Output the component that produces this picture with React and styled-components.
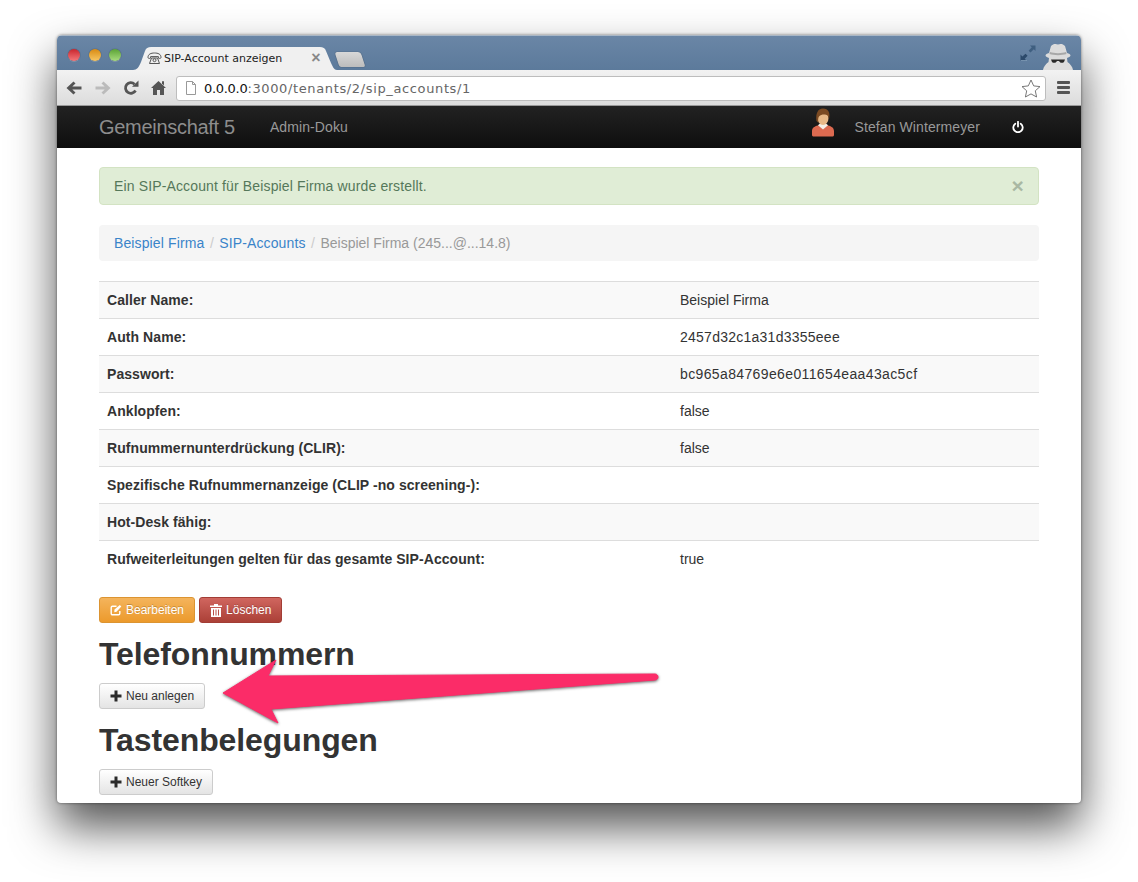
import React from 'react';
import styled, { createGlobalStyle, css } from 'styled-components';

const GlobalStyle = createGlobalStyle`
  html, body {
    margin: 0;
    background: #fff;
  }
  body {
    font-family: "Liberation Sans", Arial, sans-serif;
    font-size: 14px;
    color: #333;
  }
`;

const rows = [
  ['Caller Name:', 'Beispiel Firma', 0],
  ['Auth Name:', '2457d32c1a31d3355eee', 0.25],
  ['Passwort:', 'bc965a84769e6e011654eaa43ac5cf', 0.37],
  ['Anklopfen:', 'false', 0],
  ['Rufnummernunterdrückung (CLIR):', 'false', 0],
  ['Spezifische Rufnummernanzeige (CLIP -no screening-):', '', 0],
  ['Hot-Desk fähig:', '', 0],
  ['Rufweiterleitungen gelten für das gesamte SIP-Account:', 'true', 0],
];

const PhoneIcon = () => (
  <PhoneSvg width="15" height="13" viewBox="0 0 15 13" fill="none" stroke="#555" strokeWidth="1">
    <path d="M1 5.500C1 2 4 1 7.500 1S14 2 14 5.500c0 1-1.500 1.200-2.600.6V4.600H3.600v1.500C2.500 6.700 1 6.500 1 5.500z" />
    <path d="M4.500 6h6l2 5.500h-10z" />
    <circle cx="7.500" cy="8.200" r="1.500" />
  </PhoneSvg>
);

const BackIcon = ({ color }) => (
  <svg width="16" height="14" viewBox="0 0 16 14" fill={color}>
    <path d="M7.500 0.500 9.500 2.500 6.300 5.400H15.500V8.600H6.300L9.500 11.500 7.500 13.500 0.500 7z" />
  </svg>
);

const ReloadIcon = () => (
  <svg width="16" height="16" viewBox="0 0 16 16" fill="none">
    <path d="M12.500 10.500A5.300 5.300 0 1 1 11.500 4.200" stroke="#555" strokeWidth="2.800" />
    <path d="M9 6.800H15.500V0.500z" fill="#555" />
  </svg>
);

const HomeIcon = () => (
  <svg width="15" height="15" viewBox="0 0 15 15" fill="#555">
    <path d="M7.500 1 15 8H13V15H9V10H6V15H2V8H0z" />
    <path d="M11 1.200H13V5.500L11 3.500z" />
  </svg>
);

const PageIcon = () => (
  <svg width="12" height="14" viewBox="0 0 12 14" fill="#fff" stroke="#999">
    <path d="M1.500 .5H7.500L10.500 3.500V13.500H1.500z" />
    <path d="M7.500 .5V3.500H10.500" fill="none" />
  </svg>
);

const StarIcon = () => (
  <svg width="20" height="19" viewBox="0 0 20 19" fill="#fff" stroke="#777">
    <path d="M10 1 12.700 6.900 19 7.600 14.300 11.800 15.600 18 10 14.900 4.400 18 5.700 11.800 1 7.600 7.300 6.900z" />
  </svg>
);

const ExpandIcon = () => (
  <svg width="16" height="16" viewBox="0 0 16 16">
    <path d="M10 .5H15.500V6L13.800 4.300 10.500 7.600 8.600 5.700 11.800 2.300z" fill="#3f5f80" />
    <path d="M.5 9.500V15.500H6.500L4.700 13.700 7.600 10.700 5.500 8.700 2.400 11.500z" fill="#2c4a6b" />
    <path d="M1 15H7V15.800H1z" fill="#86a0bb" />
  </svg>
);

const IncognitoIcon = () => (
  <svg width="32" height="27" viewBox="0 0 32 27">
    <path d="M7 10 9 3C11 .5 14 .5 16 1.500 18 .5 21 .5 23 3L25 10C27 10.500 28.500 11.500 28.500 12.500 28.500 13.500 26.500 14.500 25 15L25.500 19C28 21 30.500 23.500 31 27H1C1.500 23.500 4 21 6.500 19L7 15C5.500 14.500 3.500 13.500 3.500 12.500 3.500 11.500 5 10.500 7 10Z" fill="#dcdcdc" />
    <path d="M8 9C12 10.500 20 10.500 24 9L24.500 11C20 12.500 12 12.500 7.500 11Z" fill="#a8a8a8" />
    <path d="M9 16.500H23L22 19C20.500 20.500 18 20 17 18H15C14 20 11.500 20.500 10 19Z" fill="#2a2a2a" />
  </svg>
);

const AvatarIcon = () => (
  <svg width="24" height="29" viewBox="0 0 24 29">
    <path d="M1 23C1 19 5 18 8 17H16C19 18 23 19 23 23V27C23 28 22 28.500 21 28.500H3C2 28.500 1 28 1 27Z" fill="#dc6a50" />
    <path d="M7 17.200 12 21.500 17 17.200 14.500 15H9.500Z" fill="#f5efe6" />
    <ellipse cx="12" cy="10" rx="5.500" ry="7" fill="#e8b987" />
    <path d="M5.500 13C4.500 6 6.500 .5 12 .5S19.500 5 18 11C17.500 7.500 16 6.500 13 6.500 11 6.500 9.500 7 8 8.500 7 10 7 12 7.500 15Z" fill="#7b4a22" />
  </svg>
);

const PowerIcon = () => (
  <svg width="12" height="12" viewBox="0 0 12 12" fill="none" stroke="#fff" strokeWidth="1.800" strokeLinecap="round">
    <path d="M3.300 2.700A4.700 4.700 0 1 0 8.700 2.700" />
    <path d="M6 .8V5.500" />
  </svg>
);

const EditIcon = () => (
  <svg width="12" height="12" viewBox="0 0 12 12" fill="none" stroke="#fff" strokeWidth="1.400">
    <path d="M9.800 7V9.500C9.800 10.300 9.300 10.800 8.500 10.800H2.500C1.700 10.800 1.200 10.300 1.200 9.500V3.500C1.200 2.700 1.700 2.200 2.500 2.200H6.500" />
    <path d="M4.500 5.500 9.800 1 11.300 2.500 6.500 7.800 4.300 8.200z" fill="#fff" stroke="none" />
  </svg>
);

const TrashIcon = () => (
  <svg width="12" height="13" viewBox="0 0 12 13" fill="#fff">
    <path d="M4 0H8V1.500H12V3H0V1.500H4zM1 4H11V13H1zM3 5.500V11.500H4V5.500zM5.500 5.500V11.500H6.500V5.500zM8 5.500V11.500H9V5.500z" fillRule="evenodd" />
  </svg>
);

const PlusIcon = () => (
  <svg width="12" height="12" viewBox="0 0 12 12" fill="#2b2b2b">
    <path d="M4.500 .5H7.500V4.500H11.500V7.500H7.500V11.500H4.500V7.500H.5V4.500H4.500z" />
  </svg>
);

const App = () => {
  return (
    <>
      <GlobalStyle />
      <Page>
        <Browser>
          <TitleBar>
            <Lights>
              <Light $top="#c9252d" $bottom="#f5787a" />
              <Light $top="#d88a12" $bottom="#f8c763" />
              <Light $top="#5ba335" $bottom="#a9dc7f" />
            </Lights>
            <Tab>
              <TabShape width="204" height="24" viewBox="0 0 204 24">
                <path d="M0 24C4 24 6 21 8 16L12 5C13 2 15 1 18 1H187C190 1 192 2 193 5L198 17C200 21 201 24 204 24Z" fill="#f0f0f0" />
              </TabShape>
              <PhoneIcon />
              <TabTitle>SIP-Account anzeigen</TabTitle>
              <TabClose>×</TabClose>
            </Tab>
            <NewTab />
            <TitleRight>
              <ExpandBox><ExpandIcon /></ExpandBox>
              <IncognitoIcon />
            </TitleRight>
          </TitleBar>
          <Toolbar>
            <NavButtons>
              <BackIcon color="#555" />
              <Flipped><BackIcon color="#bbb" /></Flipped>
              <ReloadIcon />
              <HomeIcon />
            </NavButtons>
            <UrlBar>
              <PageIcon />
              <UrlText><b>0.0.0.0</b>:3000/tenants/2/sip_accounts/1</UrlText>
              <StarIcon />
            </UrlBar>
            <Burger>
              <span /><span /><span />
            </Burger>
          </Toolbar>
          <NavBar>
            <Brand>Gemeinschaft 5</Brand>
            <NavLink>Admin-Doku</NavLink>
            <NavRight>
              <AvatarIcon />
              <NavLink>Stefan Wintermeyer</NavLink>
              <PowerIcon />
            </NavRight>
          </NavBar>
          <Main>
            <Alert>
              Ein SIP-Account für Beispiel Firma wurde erstellt.
              <AlertClose>×</AlertClose>
            </Alert>
            <Breadcrumb>
              <a>Beispiel Firma</a>
              <Sep>/</Sep>
              <a>SIP-Accounts</a>
              <Sep>/</Sep>
              <span>Beispiel Firma (245...@...14.8)</span>
            </Breadcrumb>
            <Table>
              <tbody>
                {rows.map(([label, value, spacing]) => (
                  <tr key={label}>
                    <th>{label}</th>
                    <Value $spacing={spacing}>{value}</Value>
                  </tr>
                ))}
              </tbody>
            </Table>
            <ButtonRow>
              <Button $kind="warning"><EditIcon />Bearbeiten</Button>
              <Button $kind="danger"><TrashIcon />Löschen</Button>
            </ButtonRow>
            <Heading>Telefonnummern</Heading>
            <Button><PlusIcon />Neu anlegen</Button>
            <Heading>Tastenbelegungen</Heading>
            <Button><PlusIcon />Neuer Softkey</Button>
          </Main>
          <Arrow width="460" height="70" viewBox="0 0 460 70">
            <path d="M8 39 61 6 53 22 440 20C444 20 444 26 440 26L56 55 63 69Z" fill="#fb2c68" stroke="#fb2c68" strokeWidth="1" strokeLinejoin="round" />
          </Arrow>
        </Browser>
      </Page>
    </>
  );
};

const Page = styled.div`
  height: 882px;
  padding: 35px 57px 0;
  box-sizing: border-box;
  overflow: hidden;
`;

const Browser = styled.div`
  position: relative;
  width: 1024px;
  height: 768px;
  border-radius: 5px 5px 4px 4px;
  overflow: hidden;
  background: #fff;
  box-shadow: 0 24px 46px rgba(0, 0, 0, 0.68), 0 0 3px rgba(0, 0, 0, 0.5);
`;

const TitleBar = styled.div`
  height: 35px;
  box-sizing: border-box;
  display: flex;
  align-items: flex-end;
  padding-left: 11px;
  background: linear-gradient(#6a86a6, #5c7a9b);
  border-top: 1px solid #a9b7c6;
`;

const Lights = styled.div`
  display: flex;
  gap: 8.500px;
  align-self: flex-start;
  margin-top: 13px;
`;

const Light = styled.span`
  width: 12px;
  height: 12px;
  border-radius: 50%;
  background: linear-gradient(${(p) => p.$top}, ${(p) => p.$bottom});
  box-shadow: 0 0 1px rgba(0, 0, 0, 0.7), 0 1px 0 rgba(255, 255, 255, 0.25);
`;

const Tab = styled.div`
  position: relative;
  width: 196px;
  height: 24px;
  margin-left: 12px;
  display: flex;
  align-items: center;
  gap: 2px;
  padding-left: 14px;
  box-sizing: border-box;
`;

const TabShape = styled.svg`
  position: absolute;
  left: 0;
  top: 0;
`;

const PhoneSvg = styled.svg`
  position: relative;
`;

const TabTitle = styled.span`
  position: relative;
  font-family: "DejaVu Sans", sans-serif;
  font-size: 11px;
  color: #222;
  white-space: nowrap;
`;

const TabClose = styled.span`
  position: relative;
  margin-left: 27px;
  font-size: 16px;
  font-weight: bold;
  color: #888;
`;

const NewTab = styled.div`
  width: 26px;
  height: 15px;
  margin: 0 0 3px 8px;
  border-radius: 3px 3px 2px 2px;
  background: linear-gradient(#d8d8d8, #bcbcbc);
  transform: skewX(18deg);
  box-shadow: 0 0 1px rgba(0, 0, 0, 0.6);
`;

const TitleRight = styled.div`
  margin-left: auto;
  display: flex;
  align-items: flex-end;
  gap: 6px;
  padding-right: 7px;
`;

const ExpandBox = styled.span`
  display: flex;
  margin-bottom: 9px;
`;

const Toolbar = styled.div`
  height: 36px;
  box-sizing: border-box;
  display: flex;
  align-items: center;
  padding: 0 11px 0 9px;
  background: linear-gradient(#f2f2f2, #dcdcdc);
  border-bottom: 1px solid #999;
`;

const NavButtons = styled.div`
  display: flex;
  align-items: center;
  gap: 12px;
  width: 110px;
`;

const Flipped = styled.span`
  display: flex;
  margin-left: 1px;
  transform: scaleX(-1);
`;

const UrlBar = styled.div`
  flex: 1;
  height: 25px;
  margin-top: 1px;
  box-sizing: border-box;
  display: flex;
  align-items: center;
  padding: 0 4px 0 8px;
  background: #fff;
  border: 1px solid #bdbdbd;
  border-radius: 3px;
`;

const UrlText = styled.span`
  flex: 1;
  margin-left: 7px;
  font-family: "DejaVu Sans", sans-serif;
  font-size: 13px;
  letter-spacing: 0.63px;
  color: #666;
  b {
    font-weight: normal;
    letter-spacing: -0.3px;
    color: #111;
  }
`;

const Burger = styled.div`
  width: 13px;
  margin-left: 11px;
  display: flex;
  flex-direction: column;
  gap: 2px;
  span {
    height: 3px;
    background: #555;
    border-radius: 1px;
  }
`;

const NavBar = styled.div`
  height: 42px;
  box-sizing: border-box;
  display: flex;
  align-items: center;
  padding: 0 57px 0 42px;
  background: linear-gradient(#222, #0e0e0e);
`;

const Brand = styled.span`
  font-size: 20px;
  letter-spacing: -0.3px;
  color: #8d8d8d;
  margin-right: 35px;
`;

const NavLink = styled.span`
  color: #999;
  letter-spacing: 0.1px;
`;

const NavRight = styled.div`
  margin-left: auto;
  display: flex;
  align-items: center;
  gap: 20px;
  svg:first-child {
    margin-bottom: 9px;
    margin-right: -1px;
  }
  svg:last-child {
    margin-left: 12px;
  }
`;

const Main = styled.div`
  padding: 19px 42px 0;
`;

const Alert = styled.div`
  position: relative;
  height: 38px;
  box-sizing: border-box;
  line-height: 36px;
  padding: 0 14px;
  margin-bottom: 20px;
  letter-spacing: 0.14px;
  color: #55785a;
  background: #e0edd6;
  border: 1px solid #d3e3c3;
  border-radius: 4px;
`;

const AlertClose = styled.span`
  position: absolute;
  right: 14px;
  top: 0;
  font-size: 21px;
  font-weight: bold;
  color: #a9b8a3;
`;

const Breadcrumb = styled.div`
  height: 36px;
  box-sizing: border-box;
  padding: 8px 15px;
  line-height: 20px;
  margin-bottom: 20px;
  color: #999;
  background: #f5f5f5;
  border-radius: 4px;
  a {
    color: #3a84c9;
    letter-spacing: 0.12px;
  }
`;

const Sep = styled.span`
  padding: 0 5.500px;
  color: #ccc;
`;

const Table = styled.table`
  width: 940px;
  margin-bottom: 20px;
  border-collapse: collapse;
  table-layout: fixed;
  tr:nth-child(odd) {
    background: #f9f9f9;
  }
  th, td {
    height: 36px;
    padding: 8px;
    line-height: 20px;
    text-align: left;
    box-sizing: border-box;
    border-top: 1px solid #ddd;
  }
  th {
    width: 573px;
    letter-spacing: 0.07px;
  }
`;

const Value = styled.td`
  letter-spacing: ${(p) => p.$spacing}px;
`;

const ButtonRow = styled.div`
  display: flex;
  gap: 4px;
`;

const kinds = {
  warning: css`
    color: #fff;
    text-shadow: 0 -1px 0 rgba(0, 0, 0, 0.2);
    background: linear-gradient(#f4b45c, #ec9a2c);
    border-color: #dc9431;
  `,
  danger: css`
    color: #fff;
    text-shadow: 0 -1px 0 rgba(0, 0, 0, 0.2);
    background: linear-gradient(#d0665f, #ab4037);
    border-color: #a23d35;
  `,
  plain: css`
    color: #333;
    background: linear-gradient(#fff, #e4e4e4);
    border-color: #ccc;
  `,
};

const Button = styled.button`
  height: 26px;
  display: inline-flex;
  align-items: center;
  gap: 4px;
  padding: 0 10px;
  font-family: inherit;
  font-size: 12px;
  border: 1px solid;
  border-radius: 3px;
  ${(p) => kinds[p.$kind || 'plain']}
`;

const Heading = styled.h1`
  margin: 11px 0 9px;
  font-size: 32px;
  line-height: 40px;
  font-weight: bold;
  letter-spacing: -0.1px;
  color: #333;
`;

const Arrow = styled.svg`
  position: absolute;
  left: 158px;
  top: 619px;
  filter: drop-shadow(0 1px 1.500px rgba(0, 0, 0, 0.6));
`;

export default App;
